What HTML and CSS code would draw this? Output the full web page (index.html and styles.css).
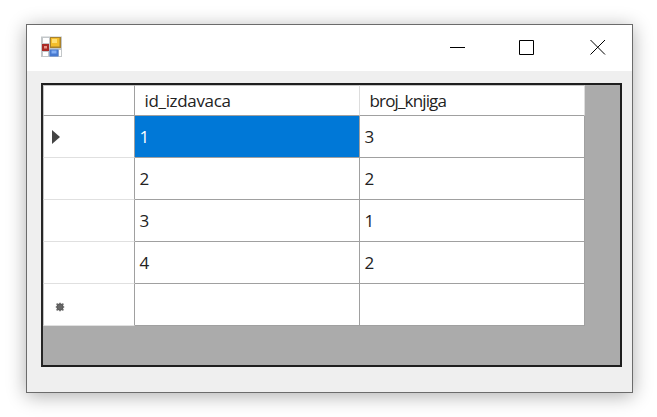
FILE: index.html
```
<!DOCTYPE html>
<html lang="sr">
<head>
<meta charset="utf-8">
<title>Form</title>
<link rel="stylesheet" href="styles.css">
</head>
<body>
<div class="window">
  <header class="titlebar">
    <svg class="app-icon" width="22" height="22" viewBox="0 0 22 22">
      <rect x="0" y=".5" width="21" height="20.500" fill="#c3c7c9"/>
      <path d="M2 2h6v5H2zM2 16h5v4H2zM18 14h2v6h-2z" fill="#fff"/>
      <rect x="9" y="1" width="11" height="11" fill="#a9822c"/>
      <rect x="10" y="2" width="8.500" height="8.500" fill="#f4be2c"/>
      <rect x="11" y="3" width="5" height="4" fill="#ffdf73"/>
      <rect x="1" y="8" width="7" height="7" fill="#a92b27"/>
      <rect x="3" y="10" width="3" height="2.500" fill="#e99388"/>
      <rect x="8.500" y="13.500" width="9" height="7" fill="#4779cf"/>
      <rect x="10.500" y="14.500" width="5" height="3" fill="#82aef4"/>
    </svg>
    <svg class="control" width="16" height="16" viewBox="0 0 16 16"><path d="M0 8.500h15"/></svg>
    <svg class="control" width="16" height="16" viewBox="0 0 16 16"><path d="M.5 1.500h14v14H.5z"/></svg>
    <svg class="control close" width="16" height="16" viewBox="0 0 16 16"><path d="M.5 1l14.500 14.500M15 1L.5 15.500"/></svg>
  </header>
  <main class="grid-box">
    <div class="grid">
      <div class="head corner"></div><div class="head">id_izdavaca</div><div class="head last">broj_knjiga</div>
      <div class="row-head"><svg width="8" height="14" viewBox="0 0 8 14"><path d="M0 0l8 7-8 7z" fill="#444"/></svg></div><div class="cell selected">1</div><div class="cell">3</div>
      <div class="row-head"></div><div class="cell">2</div><div class="cell">2</div>
      <div class="row-head"></div><div class="cell">3</div><div class="cell">1</div>
      <div class="row-head"></div><div class="cell">4</div><div class="cell">2</div>
      <div class="row-head new-row"><svg width="10" height="10" viewBox="0 0 10 10"><circle cx="5" cy="5" r="3.400" fill="#444"/><path d="M5 .8v8.400M.8 5h8.400M1.600 1.600l6.800 6.800M8.400 1.600l-6.800 6.800" stroke="#666" stroke-width="1.500"/></svg></div><div class="cell"></div><div class="cell"></div>
    </div>
  </main>
</div>
</body>
</html>
```
FILE: styles.css
```
* { box-sizing: border-box; }
body {
  margin: 0;
  padding: 24px 0 0 26px;
  height: 417px;
  overflow: hidden;
  background: #fff;
  font-family: "Open Sans", "Noto Sans", sans-serif;
  color: #222;
}
.window {
  width: 607px;
  height: 369px;
  border: 1px solid #6b6b6b;
  background: #efefef;
  box-shadow: 0 3px 18px rgba(0, 0, 0, .32);
}
.titlebar {
  display: flex;
  align-items: center;
  height: 46px;
  padding: 0 26px 2px 14px;
  background: #fff;
}
.app-icon { margin-right: auto; }
.control {
  margin-left: 53px;
  fill: none;
  stroke: #000;
  stroke-width: 1;
}
.close { margin-left: 55px; }
.grid-box {
  width: 581px;
  height: 284px;
  margin: 12px 0 0 14px;
  border: 2px solid #1e1e1e;
  border-left-color: #262626;
  background: #ababab;
}
.grid {
  display: grid;
  grid-template-columns: 92px 225px 225px;
  grid-template-rows: 31px repeat(5, 42px);
  width: 542px;
}
.head {
  padding: 4px 0 0 9.5px;
  border-top: 1px solid #c4c4c4;
  border-right: 1px solid #ddd;
  border-bottom: 1px solid #a0a0a0;
  background: #fff;
  font-size: 17px;
  line-height: 22px;
  letter-spacing: -.33px;
}
.last { letter-spacing: -.85px; }
.corner { border-right-color: #a0a0a0; border-left: 1px solid #c4c4c4; }
.row-head {
  display: flex;
  align-items: center;
  padding: 1px 0 0 8px;
  border-left: 1px solid #c4c4c4;
  border-right: 1px solid #a0a0a0;
  border-bottom: 1px solid #e0e0e0;
  background: #fff;
}
.new-row { padding: 4px 0 0 11px; }
.cell {
  padding: 9px 0 0 4.5px;
  border-right: 1px solid #a0a0a0;
  border-bottom: 1px solid #a0a0a0;
  background: #fff;
  font-size: 17px;
  line-height: 24px;
}
.selected { background: #0078d7; color: #fff; }
```
